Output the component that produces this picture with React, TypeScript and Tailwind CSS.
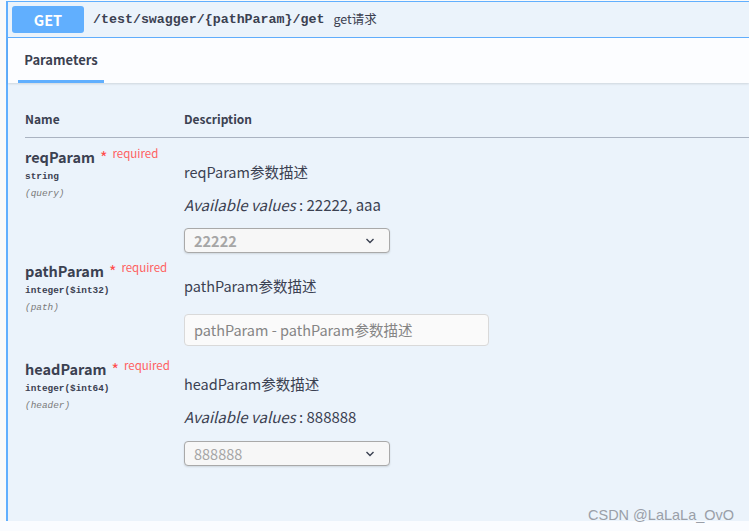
import React from "react";

const sans = { fontFamily: '"Noto Sans CJK SC", "Noto Sans", sans-serif' };
const mono = { fontFamily: '"Liberation Mono", "DejaVu Sans Mono", monospace' };

function Chevron() {
  return (
    <svg width="10" height="6" viewBox="0 0 10 6" className="shrink-0">
      <polyline points="1.5,1 5,4.5 8.5,1" fill="none" stroke="#3b4151" strokeWidth="1.4" />
    </svg>
  );
}

function NameCell({ name, type, loc }: { name: string; type: string; loc: string }) {
  return (
    <div className="w-[159px] shrink-0">
      <div className="flex items-start">
        <span className="text-[14.5px] font-bold leading-[20px] text-[#3b4151]">{name}</span>
        <span className="ml-[5px] text-[16px] leading-[20px] text-[#ff4d4d]">*</span>
        <span className="ml-[5px] text-[11.5px] leading-[12px] text-[#ff6060]">required</span>
      </div>
      <div style={mono} className="mt-[3px] text-[9.4px] font-bold leading-[14px] text-[#3b4151]">
        {type}
      </div>
      <div style={mono} className="mt-[3px] text-[9.4px] italic leading-[14px] text-[#7a7a7a]">
        ({loc})
      </div>
    </div>
  );
}

function Select({ value, bold }: { value: string; bold?: boolean }) {
  return (
    <div className="flex h-[25px] w-[206px] items-center justify-between rounded-[4px] border border-[#a9a9a9] bg-[#f7f7f7] pl-[9px] pr-[14px] shadow-[0_1px_2px_rgba(0,0,0,0.12)]">
      <span className={`text-[14.5px] leading-[20px] text-[#a6a6a6] ${bold ? "font-bold" : ""}`}>{value}</span>
      <Chevron />
    </div>
  );
}

export default function App() {
  return (
    <div style={sans} className="relative flex h-[531px] w-[749px] flex-col overflow-hidden bg-[#fafafa] text-[#3b4151]">
      <div className="ml-[6px] mt-[1px] flex h-[520px] flex-col border-l-2 border-t border-[#61affe] bg-[#ebf3fb]">
        {/* header */}
        <div className="flex h-[36px] shrink-0 items-center border-b border-[#61affe] pl-[4px]">
          <div className="flex h-[27px] w-[72px] items-center justify-center rounded-[3px] bg-[#61affe] text-[14.5px] font-bold text-white">
            GET
          </div>
          <span style={mono} className="ml-[9px] text-[13.3px] font-bold text-[#3b4151]">
            /test/swagger/&#123;pathParam&#125;/get
          </span>
          <span className="ml-[9px] text-[12.5px] text-[#3b4151]">get请求</span>
        </div>
        {/* tabs */}
        <div className="relative z-10 flex h-[45px] shrink-0 items-end bg-[#fcfdff] shadow-[0_1px_2px_rgba(0,0,0,0.12)]">
          <div className="ml-[10px] flex h-full w-[86px] flex-col items-center justify-end">
            <span className="mb-[11px] text-[13px] font-bold leading-[18px] text-[#3b4151]">Parameters</span>
            <div className="h-[3px] w-full bg-[#61affe]" />
          </div>
        </div>
        {/* body */}
        <div className="flex flex-1 flex-col pl-[17px] pt-[28px]">
          <div className="flex border-b border-[#aab3c1] pb-[10px] text-[12px] font-bold leading-[16px]">
            <div className="w-[159px]">Name</div>
            <div>Description</div>
          </div>

          {/* row 1 */}
          <div className="flex pt-[9px]">
            <NameCell name="reqParam" type="string" loc="query" />
            <div className="pt-[14px]">
              <div className="text-[14.5px] leading-[22px]">reqParam参数描述</div>
              <div className="mt-[11px] text-[15px] leading-[22px]">
                <i>Available values</i>&nbsp;: 22222, aaa
              </div>
              <div className="mt-[12px]">
                <Select value="22222" bold />
              </div>
            </div>
          </div>

          {/* row 2 */}
          <div className="flex pt-[8px]">
            <NameCell name="pathParam" type="integer($int32)" loc="path" />
            <div className="pt-[14px]">
              <div className="text-[14.5px] leading-[22px]">pathParam参数描述</div>
              <div className="mt-[17px] flex h-[32px] w-[305px] items-center rounded-[4px] border border-[#d9d9d9] bg-[#fafafa] pl-[9px] text-[14.5px] text-[#858585]">
                pathParam - pathParam参数描述
              </div>
            </div>
          </div>

          {/* row 3 */}
          <div className="flex pt-[13px]">
            <NameCell name="headParam" type="integer($int64)" loc="header" />
            <div className="pt-[14px]">
              <div className="text-[14.5px] leading-[22px]">headParam参数描述</div>
              <div className="mt-[11px] text-[15px] leading-[22px]">
                <i>Available values</i>&nbsp;: 888888
              </div>
              <div className="mt-[13px]">
                <Select value="888888" />
              </div>
            </div>
          </div>
        </div>
      </div>
      <div className="flex-1 bg-[#fafcff]" />
      <div
        style={{ fontFamily: '"Liberation Sans", Arial, sans-serif' }}
        className="absolute left-[588px] top-[505px] text-[14.5px] leading-[20px] text-[#9a9fa8]"
      >
        CSDN @LaLaLa_OvO
      </div>
    </div>
  );
}
